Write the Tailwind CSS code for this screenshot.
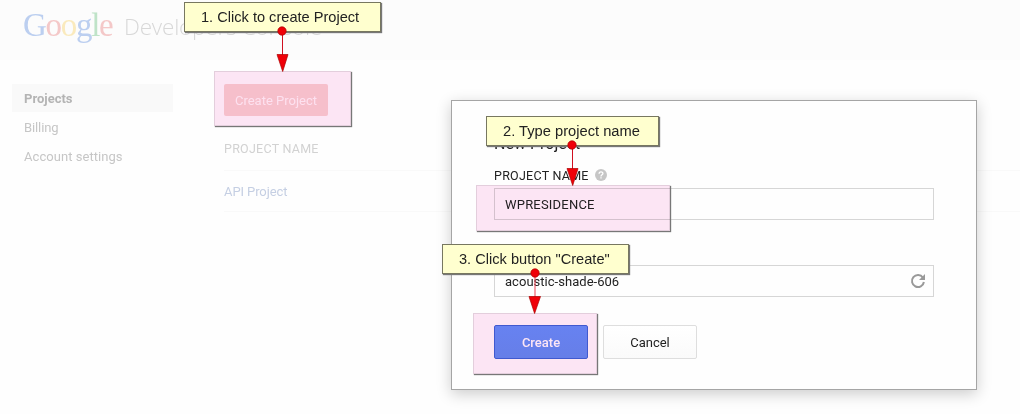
<!DOCTYPE html>
<html lang="en">
<head>
<meta charset="utf-8">
<title>Google Developers Console</title>
<script src="https://cdn.jsdelivr.net/npm/@tailwindcss/browser@4"></script>
</head>
<body class="relative w-[1020px] h-[414px] overflow-hidden bg-[#fefefe] font-['Roboto',sans-serif] text-[13px]">
  <header class="flex h-[60px] bg-[#fcfcfc] pl-[23px] whitespace-nowrap">
    <div class="w-[101px] font-['Liberation_Serif',serif] text-[33px] leading-[50px] tracking-[-1.3px]"><span class="text-[#bccff0]">G</span><span class="text-[#f4c8c8]">o</span><span class="text-[#faeabd]">o</span><span class="text-[#bccff0]">g</span><span class="text-[#bfe3c8]">l</span><span class="text-[#f4c8c8]">e</span></div>
    <div class="font-['Open_Sans',sans-serif] font-light text-[22.5px] tracking-[-0.2px] leading-[53px] text-[#d8d8d8]">Developers Console</div>
  </header>
  <div class="flex">
    <nav class="w-[212px] shrink-0 pt-6 pl-[12px] text-[#c6c6c6]">
      <div class="w-[161px] h-[28px] bg-[#f9f9f9] pl-[12px] leading-[29px] font-bold text-[#b4b4b4]">Projects</div>
      <div class="h-[29px] pl-[12px] leading-[32px] tracking-[-0.1px]">Billing</div>
      <div class="h-[29px] pl-[12px] leading-[32px] tracking-[0.05px]">Account settings</div>
    </nav>
    <main class="flex-1 pl-[12px] pt-[24px]">
      <div class="w-[104px] h-[32px] rounded-[2px] bg-[#f8d4d4] text-[#fffafa] text-center leading-[34px]">Create Project</div>
      <div class="h-[55px] pt-[16px] leading-[34px] text-[12.5px] text-[#d2d2d2] tracking-[0.25px] border-b border-[#f9f9f9]">PROJECT NAME</div>
      <div class="h-[41px] leading-[42px] text-[#c5cfe3] tracking-[-0.1px] border-b border-[#f9f9f9]">API Project</div>
    </main>
  </div>

  <section class="absolute left-[451px] top-[100px] w-[526px] h-[290px] bg-[#fefefe] border border-[#a5a5a5] shadow-[0_4px_14px_rgba(0,0,0,0.2)] pl-[42px] pr-[42px] pt-[32px] text-[#222]">
    <h2 class="text-[16px] leading-[22px] h-[32px]">New Project</h2>
    <div class="flex items-center h-[22px] text-[12.5px] gap-[6px]">
      <span class="w-[95px] whitespace-nowrap tracking-[0.25px]">PROJECT NAME</span>
      <svg class="size-[12px] -mt-[2px]" viewBox="0 0 12 12"><circle cx="6" cy="6" r="6" fill="#c6c6c6"/><path d="M4.1 4.8C4.1 2.2 7.9 2.2 7.9 4.6C7.9 5.9 6 5.8 6 7.4M6 8.3V9.6" fill="none" stroke="#fff" stroke-width="1.3"/></svg>
    </div>
    <div class="mt-[1px] h-[32px] border border-[#d6d6d6] pl-[10px] leading-[31px] tracking-[0.2px]">WPRESIDENCE</div>
    <div class="mt-[45px] h-[32px] border border-[#d6d6d6] pl-[10px] pr-[7px] flex items-center justify-between">
      <span class="tracking-[0.03px] pt-[1px]">acoustic-shade-606</span>
      <svg class="size-[16px]" viewBox="0 0 16 16"><path d="M12.9 4.6A6 6 0 1 0 13.9 9" fill="none" stroke="#999" stroke-width="2"/><path d="M15 1v6H9z" fill="#999"/></svg>
    </div>
    <div class="mt-[28px] flex gap-[15px] text-center leading-[33px]">
      <div class="w-[94px] h-[34px] rounded-[2px] border border-[#4062d8] bg-linear-to-b from-[#6890fb] to-[#678cf2] text-white font-medium">Create</div>
      <div class="w-[94px] h-[34px] rounded-[2px] border border-[#dedede] bg-linear-to-b from-white to-[#fafafa]">Cancel</div>
    </div>
  </section>

  <!-- highlighted areas -->
  <div class="absolute left-[214px] top-[71px] w-[137px] h-[55px] bg-[#fde6f5] mix-blend-multiply border border-[#e4cfdd]"></div>
  <div class="absolute left-[214px] top-[71px] w-[137px] h-[55px] shadow-[1px_1px_1px_#777]"></div>
  <div class="absolute left-[476px] top-[185px] w-[194px] h-[46px] bg-[#fde6f5] mix-blend-multiply border border-[#e4cfdd]"></div>
  <div class="absolute left-[476px] top-[185px] w-[194px] h-[46px] shadow-[1px_1px_1px_#777]"></div>
  <div class="absolute left-[473px] top-[313px] w-[124px] h-[61px] bg-[#fde6f5] mix-blend-multiply border border-[#e4cfdd]"></div>
  <div class="absolute left-[473px] top-[313px] w-[124px] h-[61px] shadow-[1px_1px_1px_#777]"></div>

  <!-- callouts -->
  <div class="absolute left-[184px] top-[2px] w-[197px] h-[30px] bg-[#ffffcf] border border-[#777760] shadow-[1px_1px_1px_#777] font-['Liberation_Sans',sans-serif] text-[14.6px] leading-[28px] text-[#222] pl-[16px] whitespace-nowrap">1. Click to create Project</div>
  <div class="absolute left-[486px] top-[116px] w-[173px] h-[30px] bg-[#ffffcf] border border-[#777760] shadow-[1px_1px_1px_#777] font-['Liberation_Sans',sans-serif] text-[14.7px] leading-[28px] text-[#222] pl-[16px] whitespace-nowrap">2. Type project name</div>
  <div class="absolute left-[442px] top-[244px] w-[187px] h-[30px] bg-[#ffffcf] border border-[#777760] shadow-[1px_1px_1px_#777] font-['Liberation_Sans',sans-serif] text-[14.6px] leading-[28px] text-[#222] pl-[16px] whitespace-nowrap">3. Click button "Create"</div>

  <svg class="absolute left-[276px] top-[26px] w-[13px] h-[46px]" viewBox="0 0 13 46"><path d="M6.5 5V30" stroke="#d01020"/><circle cx="6" cy="5" r="4.2" fill="#f00008" stroke="#a00" stroke-width=".7"/><path d="M1 28.5H12L6.7 45.5z" fill="#f00008" stroke="#a00" stroke-width=".7"/></svg>
  <svg class="absolute left-[566px] top-[140px] w-[13px] h-[46px]" viewBox="0 0 13 46"><path d="M6.5 5V30" stroke="#d01020"/><circle cx="6" cy="5" r="4.2" fill="#f00008" stroke="#a00" stroke-width=".7"/><path d="M1 28.5H12L6.7 45.5z" fill="#f00008" stroke="#a00" stroke-width=".7"/></svg>
  <svg class="absolute left-[528px] top-[268px] w-[13px] h-[46px]" viewBox="0 0 13 46"><path d="M7 5V30" stroke="#f04050"/><circle cx="7" cy="5" r="4.2" fill="#f00008" stroke="#a00" stroke-width=".7"/><path d="M1 28.5H12.5L6.6 45.5z" fill="#f00008" stroke="#a00" stroke-width=".7"/></svg>
</body>
</html>
